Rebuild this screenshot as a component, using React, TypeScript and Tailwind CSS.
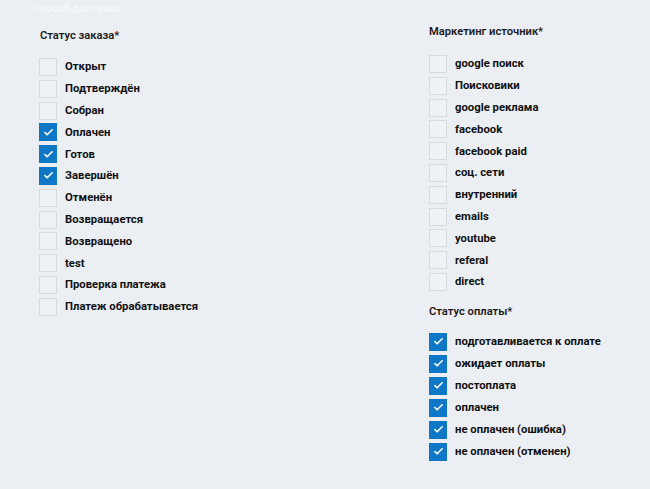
import { Check } from 'lucide-react';

const orderStatuses = [
  { label: 'Открыт', checked: false },
  { label: 'Подтверждён', checked: false },
  { label: 'Собран', checked: false },
  { label: 'Оплачен', checked: true },
  { label: 'Готов', checked: true },
  { label: 'Завершён', checked: true },
  { label: 'Отменён', checked: false },
  { label: 'Возвращается', checked: false },
  { label: 'Возвращено', checked: false },
  { label: 'test', checked: false },
  { label: 'Проверка платежа', checked: false },
  { label: 'Платеж обрабатывается', checked: false },
];

const sources = [
  'google поиск',
  'Поисковики',
  'google реклама',
  'facebook',
  'facebook paid',
  'соц. сети',
  'внутренний',
  'emails',
  'youtube',
  'referal',
  'direct',
];

const paymentStatuses = [
  'подготавливается к оплате',
  'ожидает оплаты',
  'постоплата',
  'оплачен',
  'не оплачен (ошибка)',
  'не оплачен (отменен)',
];

function CheckRow({ label, checked }: { label: string; checked: boolean }) {
  return (
    <label className="flex items-center h-[18px] gap-[8px] cursor-pointer">
      {checked ? (
        <span className="w-[18px] h-[18px] bg-[#0f78c6] flex items-center justify-center shrink-0">
          <Check className="w-[11px] h-[11px] text-white" strokeWidth={3.5} />
        </span>
      ) : (
        <span className="w-[18px] h-[18px] border border-[#d9dadc] bg-[#eef1f6] shrink-0" />
      )}
      <span className="text-[11.3px] font-bold text-[#111111] leading-none">{label}</span>
    </label>
  );
}

export default function App() {
  return (
    <div
      className="w-[650px] h-[489px] bg-[#ebeef3] overflow-hidden"
      style={{ fontFamily: '"Roboto", "Noto Sans", sans-serif' }}
    >
      {/* faded caption */}
      <div className="h-[14px] pl-[32px] pt-[3px] text-[11px] leading-none text-white/70">Способ доставки</div>

      <div className="flex">
        {/* Order status */}
        <div className="w-[429px] pl-[39px] pt-[15px]">
          <h3 className="text-[11.2px] font-semibold text-[#1b1b1b] leading-[14px] pl-[1px]">Статус заказа*</h3>
          <div className="flex flex-col gap-[3.8px] mt-[15px]">
            {orderStatuses.map((s) => (
              <CheckRow key={s.label} label={s.label} checked={s.checked} />
            ))}
          </div>
        </div>

        <div className="flex-1 pt-[11px]">
          {/* Marketing source */}
          <h3 className="text-[11.2px] font-semibold text-[#1b1b1b] leading-[14px]">Маркетинг источник*</h3>
          <div className="flex flex-col gap-[3.8px] mt-[16px]">
            {sources.map((s) => (
              <CheckRow key={s} label={s} checked={false} />
            ))}
          </div>

          {/* Payment status */}
          <h3 className="text-[11.2px] font-semibold text-[#1b1b1b] leading-[14px] mt-[14px]">Статус оплаты*</h3>
          <div className="flex flex-col gap-[4px] mt-[14px]">
            {paymentStatuses.map((s) => (
              <CheckRow key={s} label={s} checked />
            ))}
          </div>
        </div>
      </div>
    </div>
  );
}
